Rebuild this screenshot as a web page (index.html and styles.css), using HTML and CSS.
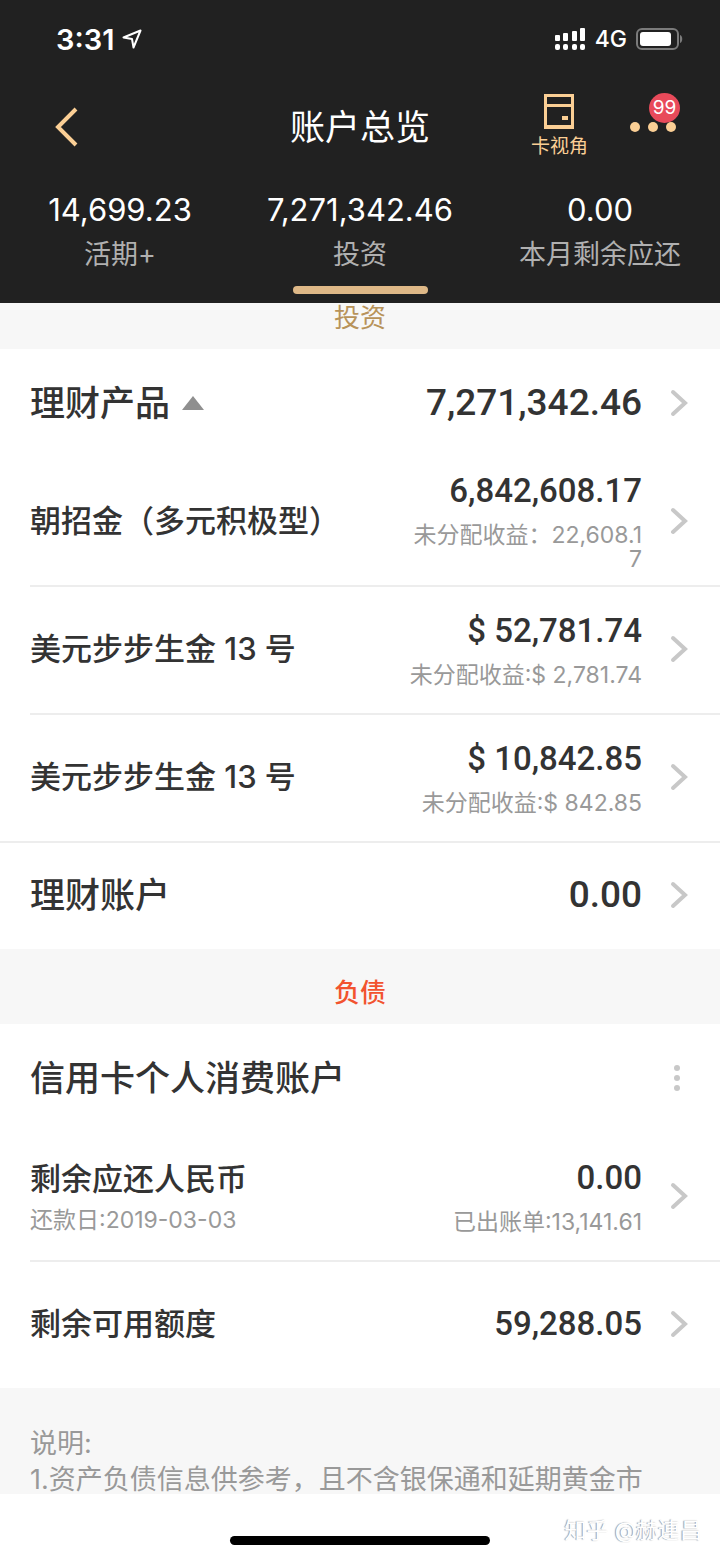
FILE: index.html
```html
<!DOCTYPE html>
<html lang="zh-CN">
<head>
  <meta charset="UTF-8">
  <meta name="viewport" content="width=device-width, initial-scale=1">
  <title>账户总览</title>
  <link rel="stylesheet" href="styles.css">
</head>
<body>
  <!-- shared chevron -->
  <svg class="defs" width="0" height="0" aria-hidden="true">
    <symbol id="chevron" viewBox="0 0 18 28">
      <path d="M3 3l12 11L3 25" fill="none" stroke="#c8c8c8" stroke-width="4" stroke-linecap="round"/>
    </symbol>
  </svg>

  <header class="header">
    <!-- Status bar -->
    <div class="status">
      <div class="status-left">
        <span class="time">3:31</span>
        <svg width="20" height="20" viewBox="0 0 20 20">
          <path d="M1.500 8.500L18.500 1.500L11.500 18.500L10 10z" fill="none" stroke="#fff" stroke-width="2" stroke-linejoin="round"/>
        </svg>
      </div>
      <div class="status-right">
        <svg width="32" height="24" viewBox="0 0 32 24" fill="#fff">
          <rect x="1" y="8" width="5" height="6" rx="1"/>
          <rect x="9" y="6" width="5" height="8" rx="1"/>
          <rect x="18" y="4" width="5" height="10" rx="1"/>
          <rect x="26" y="1" width="5" height="13" rx="1"/>
          <rect x="1" y="17" width="5" height="6" rx="2"/>
          <rect x="9" y="17" width="5" height="6" rx="2"/>
          <rect x="18" y="17" width="5" height="6" rx="2"/>
          <rect x="26" y="17" width="5" height="6" rx="2"/>
        </svg>
        <span class="network">4G</span>
        <svg width="48" height="22" viewBox="0 0 48 22">
          <rect x="1" y="1" width="41" height="20" rx="5" fill="none" stroke="#7b7b7b" stroke-width="2"/>
          <rect x="4" y="4" width="31" height="14" rx="3" fill="#fff"/>
          <path d="M44 7c3 1 3 7 0 8z" fill="#7b7b7b"/>
        </svg>
      </div>
    </div>

    <!-- Title bar -->
    <nav class="navbar">
      <button class="back" aria-label="返回">
        <svg width="24" height="40" viewBox="0 0 24 40">
          <path d="M22 2L4 20L22 38" fill="none" stroke="#fbcf95" stroke-width="4"/>
        </svg>
      </button>
      <h1>账户总览</h1>
      <div class="actions">
        <button class="card-view">
          <svg width="30" height="35" viewBox="0 0 30 35" fill="#fbcf95">
            <path fill-rule="evenodd" d="M0 0h30v35H0zM3 3v7h24V3zM3 13v18h24V13z"/>
            <rect x="18" y="22" width="6" height="4"/>
          </svg>
          <span>卡视角</span>
        </button>
        <button class="more" aria-label="更多">
          <svg width="46" height="10" viewBox="0 0 46 10" fill="#fbcf95">
            <circle cx="5" cy="5" r="5"/>
            <circle cx="23" cy="5" r="5"/>
            <circle cx="41" cy="5" r="5"/>
          </svg>
          <span class="badge">99</span>
        </button>
      </div>
    </nav>

    <!-- Account tabs -->
    <div class="tabs">
      <a class="tab" href="#current"><b>14,699.23</b><span>活期+</span></a>
      <a class="tab active" href="#invest"><b>7,271,342.46</b><span>投资</span></a>
      <a class="tab" href="#debt"><b>0.00</b><span>本月剩余应还</span></a>
    </div>
  </header>

  <main>
    <section id="invest">
      <h2 class="band band-scrolled">投资</h2>
      <a class="row row-head" href="#">
        <span class="name">理财产品
          <svg width="22" height="14" viewBox="0 0 22 14"><path d="M11 0l11 14H0z" fill="#8f8f8f"/></svg>
        </span>
        <span class="value"><b>7,271,342.46</b></span>
        <svg class="arrow"><use href="#chevron"/></svg>
      </a>
      <a class="row" href="#">
        <span class="name">朝招金（多元积极型）</span>
        <span class="value"><b>6,842,608.17</b><small>未分配收益：22,608.17</small></span>
        <svg class="arrow"><use href="#chevron"/></svg>
      </a>
      <a class="row line" href="#">
        <span class="name">美元步步生金 13 号</span>
        <span class="value"><b>$ 52,781.74</b><small>未分配收益:$ 2,781.74</small></span>
        <svg class="arrow"><use href="#chevron"/></svg>
      </a>
      <a class="row line" href="#">
        <span class="name">美元步步生金 13 号</span>
        <span class="value"><b>$ 10,842.85</b><small>未分配收益:$ 842.85</small></span>
        <svg class="arrow"><use href="#chevron"/></svg>
      </a>
      <a class="row row-head line-full" href="#">
        <span class="name">理财账户</span>
        <span class="value"><b>0.00</b></span>
        <svg class="arrow"><use href="#chevron"/></svg>
      </a>
    </section>

    <section id="debt">
      <h2 class="band band-debt">负债</h2>
      <div class="row row-head">
        <span class="name">信用卡个人消费账户</span>
        <button class="menu" aria-label="更多操作">
          <svg width="8" height="28" viewBox="0 0 8 28" fill="#c8c8c8">
            <circle cx="4" cy="4" r="3"/>
            <circle cx="4" cy="14" r="3"/>
            <circle cx="4" cy="24" r="3"/>
          </svg>
        </button>
      </div>
      <a class="row" href="#">
        <span class="name">剩余应还人民币<small>还款日:2019-03-03</small></span>
        <span class="value"><b>0.00</b><small>已出账单:13,141.61</small></span>
        <svg class="arrow"><use href="#chevron"/></svg>
      </a>
      <a class="row line" href="#">
        <span class="name">剩余可用额度</span>
        <span class="value"><b>59,288.05</b></span>
        <svg class="arrow"><use href="#chevron"/></svg>
      </a>
    </section>

    <div class="notes">
      <p>说明:</p>
      <p>1.资产负债信息供参考，且不含银保通和延期黄金市</p>
    </div>
  </main>

  <footer class="footer">
    <div class="home-bar"></div>
    <span class="watermark">知乎 @赫連昌</span>
  </footer>
</body>
</html>
```
FILE: styles.css
```css
* {
  box-sizing: border-box;
}
body {
  margin: 0;
  background: #fff;
  color: #333;
  font-family: Inter, "Noto Sans CJK SC", sans-serif;
}
h1, h2, p {
  margin: 0;
  font-weight: 400;
}
a {
  color: inherit;
  text-decoration: none;
}
button {
  padding: 0;
  border: 0;
  background: none;
  color: inherit;
  font: inherit;
  cursor: pointer;
}
svg {
  display: block;
  flex: none;
}
.defs {
  position: absolute;
}

/* Header */
.header {
  background: #212121;
  color: #fff;
}
.status {
  display: flex;
  justify-content: space-between;
  align-items: center;
  height: 78px;
  padding: 0 36px 0 56px;
}
.status-left, .status-right {
  display: flex;
  align-items: center;
}
.status-left {
  gap: 8px;
}
.status-right {
  gap: 9px;
}
.time {
  font-size: 29px;
  font-weight: 600;
}
.network {
  font-size: 23px;
  font-weight: 500;
}
.navbar {
  display: grid;
  grid-template-columns: 1fr auto 1fr;
  align-items: center;
  height: 98px;
  padding: 0 44px;
}
.back {
  justify-self: start;
  padding-left: 10px;
}
h1 {
  font-size: 35px;
  line-height: 50px;
}
.actions {
  display: flex;
  justify-content: flex-end;
  align-items: center;
  gap: 42px;
  color: #fbcf95;
}
.card-view {
  display: flex;
  flex-direction: column;
  align-items: center;
  gap: 4px;
  font-size: 19px;
  line-height: 28px;
}
.more {
  position: relative;
}
.badge {
  position: absolute;
  right: -4px;
  bottom: 9px;
  width: 31px;
  height: 30px;
  border-radius: 50%;
  background: #e84a5a;
  color: #fff;
  font-size: 19px;
  line-height: 30px;
}

/* Tabs */
.tabs {
  display: grid;
  grid-template-columns: repeat(3, 1fr);
  height: 127px;
  padding-top: 16px;
}
.tab {
  display: flex;
  flex-direction: column;
  align-items: center;
}
.tab b {
  font-size: 31px;
  font-weight: 400;
  line-height: 36px;
}
.tab span {
  color: #b0b0b0;
  font-size: 27px;
  line-height: 54px;
}
.tab.active::after {
  content: "";
  width: 135px;
  height: 8px;
  margin-top: 4px;
  border-radius: 4px;
  background: #deb887;
}

/* Section bands */
.band {
  height: 75px;
  padding-top: 14px;
  background: #f7f7f7;
  font-size: 26px;
  line-height: 60px;
  text-align: center;
}
.band-scrolled {
  height: 46px;
  padding-top: 0;
  color: #b8935a;
  line-height: 30px;
}
.band-debt {
  color: #f2532f;
  font-weight: 500;
}

/* Rows */
.row {
  display: flex;
  align-items: center;
  position: relative;
  min-height: 128px;
  padding: 0 32px 0 30px;
}
.row-head {
  min-height: 108px;
}
.line::before, .line-full::before {
  content: "";
  position: absolute;
  top: 0;
  left: 30px;
  right: 0;
  border-top: 2px solid #ededed;
}
.line-full::before {
  left: 0;
}
.name {
  flex: 1;
  font-size: 31px;
  font-weight: 500;
  line-height: 44px;
}
.row-head .name {
  display: flex;
  align-items: center;
  gap: 12px;
  font-size: 35px;
}
.value {
  max-width: 240px;
  text-align: right;
}
.value b {
  display: block;
  font-family: Roboto, sans-serif;
  font-size: 33px;
  font-weight: 500;
  line-height: 40px;
}
.row-head .value b {
  font-size: 37px;
}
small {
  display: block;
  margin-top: 12px;
  color: #999;
  font-size: 23px;
  font-weight: 400;
  line-height: 24px;
  word-break: break-all;
}
.name small {
  margin-top: 4px;
  line-height: 30px;
}
.arrow {
  width: 18px;
  height: 28px;
  margin-left: 28px;
}
.menu {
  padding: 0 7px;
}

/* Notes */
.notes {
  height: 106px;
  padding: 38px 30px 0;
  background: #f7f7f7;
  color: #999;
  font-size: 27px;
  line-height: 36px;
}

/* Footer */
.footer {
  display: flex;
  justify-content: center;
  position: relative;
  height: 65px;
  padding-top: 42px;
}
.home-bar {
  width: 36%;
  height: 9px;
  border-radius: 5px;
  background: #000;
}
.watermark {
  position: absolute;
  right: 18px;
  bottom: 12px;
  color: #fff;
  font-size: 22px;
  line-height: 34px;
  text-shadow: -1px 0 1px #999;
}
```
